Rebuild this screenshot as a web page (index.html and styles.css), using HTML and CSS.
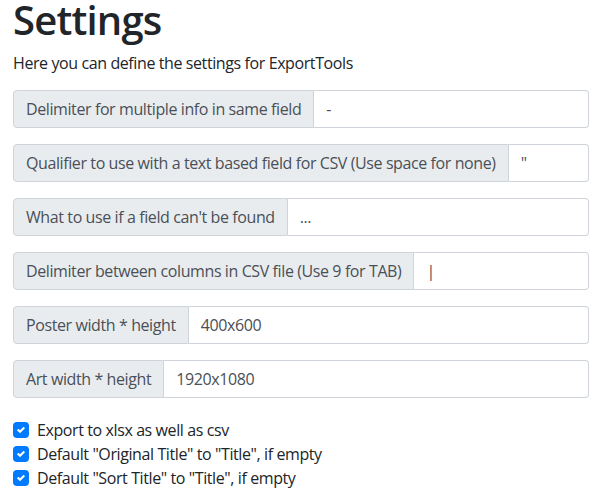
FILE: index.html
```html
<!DOCTYPE html>
<html>
<head>
<meta charset="utf-8">
<link rel="stylesheet" href="styles.css">
</head>
<body>
<div class="page">
  <h1 class="title">Settings</h1>
  <p class="intro">Here you can define the settings for ExportTools</p>

  <div class="group"><span class="addon">Delimiter for multiple info in same field</span><span class="field">-</span></div>
  <div class="group"><span class="addon">Qualifier to use with a text based field for CSV (Use space for none)</span><span class="field">"</span></div>
  <div class="group"><span class="addon">What to use if a field can't be found</span><span class="field">...</span></div>
  <div class="group"><span class="addon">Delimiter between columns in CSV file (Use 9 for TAB)</span><span class="field">|</span></div>
  <div class="group"><span class="addon">Poster width * height</span><span class="field">400x600</span></div>
  <div class="group"><span class="addon">Art width * height</span><span class="field">1920x1080</span></div>

  <div class="checks">
    <label class="check"><span class="box"><svg viewBox="0 0 8 8" width="8" height="8"><path fill="#fff" d="M6.564.75l-3.59 3.612-1.538-1.55L0 4.26l2.974 2.99L8 2.193z"/></svg></span>Export to xlsx as well as csv</label>
    <label class="check"><span class="box"><svg viewBox="0 0 8 8" width="8" height="8"><path fill="#fff" d="M6.564.75l-3.59 3.612-1.538-1.55L0 4.26l2.974 2.99L8 2.193z"/></svg></span>Default "Original Title" to "Title", if empty</label>
    <label class="check"><span class="box"><svg viewBox="0 0 8 8" width="8" height="8"><path fill="#fff" d="M6.564.75l-3.59 3.612-1.538-1.55L0 4.26l2.974 2.99L8 2.193z"/></svg></span>Default "Sort Title" to "Title", if empty</label>
  </div>
</div>
</body>
</html>
```
FILE: styles.css
```css
* { box-sizing: border-box; }
body {
  margin: 0;
  font-family: "Open Sans", "Noto Sans", sans-serif;
  font-size: 16px;
  line-height: 24px;
  letter-spacing: -0.4px;
  color: #212529;
  background: #fff;
}
.page {
  padding: 0 13px;
}
.title {
  margin: 0;
  font-size: 40px;
  line-height: 40px;
  font-weight: 600;
  letter-spacing: -0.8px;
}
.intro {
  margin: 11px 0 15px 0;
}
.group {
  display: flex;
  height: 38px;
  margin-bottom: 16px;
}
.addon {
  display: flex;
  align-items: center;
  padding: 0 12px;
  background: #e9ecef;
  border: 1px solid #ced4da;
  border-radius: 4px 0 0 4px;
  color: #495057;
  white-space: nowrap;
}
.field {
  flex: 1;
  display: flex;
  align-items: center;
  padding: 0 12px;
  border: 1px solid #ced4da;
  border-left: none;
  border-radius: 0 4px 4px 0;
  color: #495057;
  background: #fff;
}
.checks {
  margin-top: 20px;
  display: flex;
  flex-direction: column;
}
.check {
  display: flex;
  align-items: center;
  gap: 8px;
  color: #212529;
}
.box {
  width: 16px;
  height: 16px;
  border-radius: 4px;
  background: #007bff;
  display: flex;
  align-items: center;
  justify-content: center;
}
.box svg { display: block; }
```
